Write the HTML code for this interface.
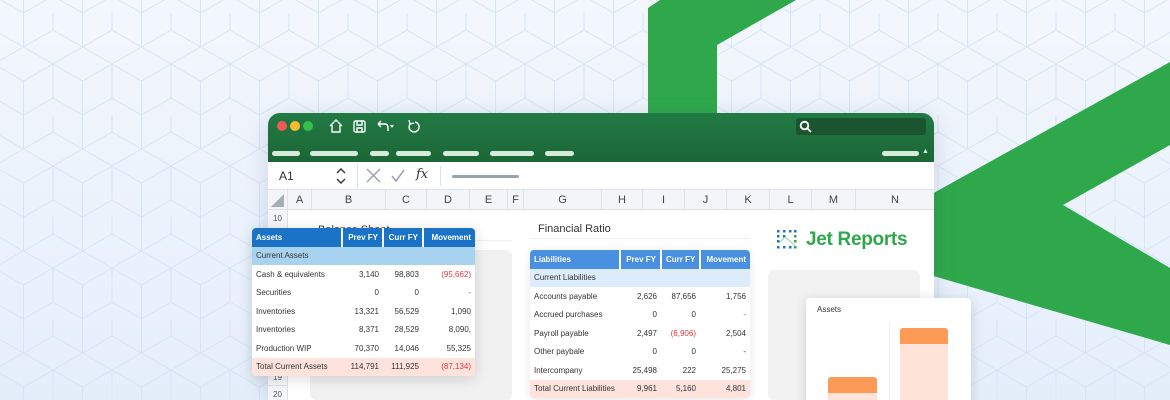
<!DOCTYPE html>
<html><head><meta charset="utf-8"><style>
*{margin:0;padding:0;box-sizing:border-box}
html,body{width:1170px;height:400px;overflow:hidden}
body{position:relative;font-family:"Liberation Sans",sans-serif;background:linear-gradient(180deg,#f3f7fd 0%,#e4eefb 100%)}
.abs{position:absolute}
.t{position:absolute;font-size:8px;color:#333}
table{border-collapse:collapse;font-size:8px;color:#333;table-layout:fixed}
td{padding:0 4px;height:18.5px;white-space:nowrap;overflow:hidden}
.r{text-align:right}
.red{color:#e0393e}
.hd td{color:#fff;font-weight:bold;border-left:2px solid #fff}
.hd td:first-child{border-left:none}
.pill{position:absolute;top:151px;height:5px;border-radius:3px;background:#d5ecdb}
.col{position:absolute;top:190px;height:20px;border-right:1px solid #dde2ea;font-size:11px;color:#444;text-align:center;line-height:20px}
</style></head><body>
<svg class="abs" style="left:0;top:0" width="1170" height="400">
<defs><pattern id="hx" width="59" height="102" patternUnits="userSpaceOnUse" x="-6" y="13">
<g fill="none" stroke="#d6e5f6" stroke-width="1">
<path d="M29.5 0 L29.5 34 L0 51 L0 85 M29.5 34 L59 51 L59 85 M0 85 L29.5 102 M59 85 L29.5 102 M29.5 0 L0 -17 M29.5 0 L59 -17 M0 51 L29.5 68 L59 51 M29.5 68 L29.5 102 M0 -17 L0 17 L29.5 34 M59 -17 L59 17 L29.5 34"/>
</g></pattern></defs>
<rect width="1170" height="400" fill="url(#hx)"/>
<polygon points="648,8 660,0 796,0 717,45 717,120 648,120" fill="#2ea84a"/>
<polygon points="930,195 1170,62 1170,145 1063,205 1170,268 1170,345 930,275" fill="#2ea84a"/>
</svg>
<!-- window -->
<div class="abs" style="left:268px;top:113px;width:666px;height:287px;background:#fff;border-radius:12px 12px 0 0;box-shadow:0 4px 24px rgba(60,80,120,.18);overflow:hidden">
<div class="abs" style="left:0;top:0;width:666px;height:49px;background:linear-gradient(180deg,#217a44,#1c6637)"></div>
</div>
<div class="abs" style="left:277px;top:121px;width:10px;height:10px;border-radius:50%;background:#f05a55"></div>
<div class="abs" style="left:290px;top:121px;width:10px;height:10px;border-radius:50%;background:#f6bb2e"></div>
<div class="abs" style="left:303px;top:121px;width:10px;height:10px;border-radius:50%;background:#35c14a"></div>
<svg class="abs" style="left:325px;top:117px" width="100" height="20" fill="none" stroke="#fff" stroke-width="1.4">
<path d="M5 9 L11 3 L17 9 M7 8 V15 H15 V8"/>
<rect x="29" y="4" width="11" height="11" rx="1.5"/><path d="M32 4 V8 H37 V4 M32 15 V11 H37 V15"/>
<path d="M53 7 H60 Q63 7 63 11 V14 M53 7 L56 4 M53 7 L56 10"/><path d="M65 8 L69 8 L67 11 Z" fill="#fff" stroke="none"/>
<path d="M90 5 A5 5 0 1 1 85 7 M84 3 L85 7 L89 6"/>
</svg>
<div class="abs" style="left:796px;top:118px;width:130px;height:17px;border-radius:3px;background:#1b5530"></div>
<svg class="abs" style="left:799px;top:120px" width="14" height="14" fill="none" stroke="#fff" stroke-width="1.8"><circle cx="5.5" cy="5.5" r="3.8"/><path d="M8.5 8.5 L12 12"/></svg>
<div class="pill" style="left:272px;width:28px"></div>
<div class="pill" style="left:310px;width:48px"></div>
<div class="pill" style="left:370px;width:19px"></div>
<div class="pill" style="left:396px;width:35px"></div>
<div class="pill" style="left:443px;width:36px"></div>
<div class="pill" style="left:490px;width:44px"></div>
<div class="pill" style="left:545px;width:29px"></div>
<div class="pill" style="left:882px;width:37px"></div>
<div class="abs" style="left:922px;top:148px;font-size:7px;color:#d5ecdb">▲</div>
<!-- formula bar -->
<div class="abs" style="left:268px;top:162px;width:666px;height:28px;border-bottom:1px solid #dde2ea"></div>
<div class="t" style="left:279px;top:169px;font-size:12px;color:#333">A1</div>
<svg class="abs" style="left:335px;top:167px" width="12" height="18" fill="none" stroke="#333" stroke-width="1.4"><path d="M2 6 L6 2 L10 6 M2 12 L6 16 L10 12"/></svg>
<div class="abs" style="left:357px;top:162px;width:1px;height:28px;background:#dde2ea"></div>
<svg class="abs" style="left:366px;top:168px" width="70" height="16" fill="none" stroke="#9aa3ad" stroke-width="1.5"><path d="M1 1 L14 14 M14 1 L1 14 M26 8 L30 13 L38 2"/></svg>
<div class="t" style="left:416px;top:167px;font-size:13px;color:#333;font-style:italic;font-family:'DejaVu Serif',serif">fx</div>
<div class="abs" style="left:440px;top:166px;width:1px;height:20px;background:#dde2ea"></div>
<div class="abs" style="left:452px;top:175px;width:67px;height:3px;border-radius:2px;background:#9aa3ad"></div>
<!-- col headers -->
<div class="abs" style="left:268px;top:190px;width:666px;height:20px;background:#f3f5f8;border-bottom:1px solid #dde2ea"></div>
<svg class="abs" style="left:270px;top:193px" width="16" height="15"><path d="M14 1 V14 H1 Z" fill="#a5adb6"/></svg>
<div class="col" style="left:268px;width:20px"></div>
<div class="col" style="left:288px;width:24px">A</div>
<div class="col" style="left:312px;width:74px">B</div>
<div class="col" style="left:386px;width:41px">C</div>
<div class="col" style="left:427px;width:43px">D</div>
<div class="col" style="left:470px;width:38px">E</div>
<div class="col" style="left:508px;width:16px">F</div>
<div class="col" style="left:524px;width:78px">G</div>
<div class="col" style="left:602px;width:41px">H</div>
<div class="col" style="left:643px;width:42px">I</div>
<div class="col" style="left:685px;width:42px">J</div>
<div class="col" style="left:727px;width:43px">K</div>
<div class="col" style="left:770px;width:42px">L</div>
<div class="col" style="left:812px;width:44px">M</div>
<div class="col" style="left:856px;width:78px;border-right:none">N</div>
<div class="abs" style="left:268px;top:210px;width:20px;height:190px;background:#f3f5f8;border-right:1px solid #dde2ea"></div>
<div class="t" style="left:273px;top:214px;color:#555">10</div>
<div class="t" style="left:273px;top:373px;color:#555">19</div>
<div class="abs" style="left:268px;top:385px;width:20px;height:1px;background:#dde2ea"></div>
<div class="t" style="left:273px;top:390px;color:#555">20</div>
<div class="t" style="left:318px;top:224px;font-size:11px;color:#444">Balance Sheet</div>
<div class="abs" style="left:310px;top:240px;width:202px;height:1px;background:#eee"></div>
<div class="abs" style="left:310px;top:250px;width:202px;height:150px;background:#f1f1f1;border-radius:6px"></div>
<div class="t" style="left:538px;top:223px;font-size:11px;color:#333">Financial Ratio</div>
<div class="abs" style="left:530px;top:238px;width:220px;height:1px;background:#eee"></div>
<!-- jet reports -->
<svg class="abs" style="left:777px;top:230px" width="20" height="19">
<g fill="#1e6fd6"><rect x="0" y="0" width="2.5" height="2.5"/><rect x="6" y="0" width="2.5" height="2.5"/><rect x="12" y="0" width="2.5" height="2.5"/><rect x="17" y="0" width="2.5" height="2.5"/>
<rect x="0" y="5" width="2.5" height="2.5"/><rect x="6" y="5" width="2.5" height="2.5"/><rect x="0" y="10" width="2.5" height="2.5"/><rect x="0" y="16" width="2.5" height="2.5"/><rect x="6" y="16" width="2.5" height="2.5"/><rect x="12" y="16" width="2.5" height="2.5"/></g>
<g fill="#2ea84a"><rect x="17" y="5" width="2.5" height="2.5"/><rect x="17" y="10" width="2.5" height="2.5"/><rect x="17" y="16" width="2.5" height="2.5"/></g>
<path d="M2 13 L8 7 L14 12 L18 16" stroke="#8fd39f" fill="none" stroke-width="1"/></svg>
<div class="t" style="left:806px;top:229px;font-size:19px;font-weight:bold;color:#2ea84a;letter-spacing:-.3px">Jet Reports</div>
<div class="abs" style="left:768px;top:270px;width:152px;height:130px;background:#f2f2f2;border-radius:6px"></div>
<div class="abs" style="left:806px;top:298px;width:165px;height:110px;background:#fff;border-radius:4px;box-shadow:0 2px 12px rgba(0,0,0,.15)"></div>
<div class="t" style="left:817px;top:305px;font-size:8px">Assets</div>
<div class="abs" style="left:889px;top:322px;width:1px;height:80px;background:#eee"></div>
<div class="abs" style="left:828px;top:377px;width:49px;height:30px;background:#fde3d8;border-top:16px solid #fd9a55;border-radius:3px 3px 0 0"></div>
<div class="abs" style="left:900px;top:328px;width:48px;height:80px;background:#fde3d8;border-top:16px solid #fd9a55;border-radius:3px 3px 0 0"></div>
<!-- left table -->
<div class="abs" style="left:252px;top:228px;width:223px;background:#fff;border-radius:4px;box-shadow:0 3px 14px rgba(0,0,0,.15);overflow:hidden">
<table style="width:223px">
<colgroup><col style="width:90px"><col style="width:41px"><col style="width:40px"><col style="width:52px"></colgroup>
<tr class="hd" style="background:#1a73c6"><td style="height:17px">Assets</td><td class="r">Prev FY</td><td class="r">Curr FY</td><td class="r">Movement</td></tr>
<tr style="background:#a7d3f0"><td colspan="4">Current Assets</td></tr>
<tr><td>Cash &amp; equivalents</td><td class="r">3,140</td><td class="r">98,803</td><td class="r red">(95,662)</td></tr>
<tr><td>Securities</td><td class="r">0</td><td class="r">0</td><td class="r red">-</td></tr>
<tr><td>Inventories</td><td class="r">13,321</td><td class="r">56,529</td><td class="r">1,090</td></tr>
<tr><td>Inventories</td><td class="r">8,371</td><td class="r">28,529</td><td class="r">8,090,</td></tr>
<tr><td>Production WIP</td><td class="r">70,370</td><td class="r">14,046</td><td class="r">55,325</td></tr>
<tr style="background:#fde3dc"><td>Total Current Assets</td><td class="r">114,791</td><td class="r">111,925</td><td class="r red">(87,134)</td></tr>
</table></div>
<!-- right table -->
<div class="abs" style="left:530px;top:250px;width:220px;background:#fff;border-radius:4px;box-shadow:0 2px 10px rgba(0,0,0,.1);overflow:hidden">
<table style="width:220px">
<colgroup><col style="width:90px"><col style="width:41px"><col style="width:39px"><col style="width:50px"></colgroup>
<tr class="hd" style="background:#4a90e0"><td style="height:18px">Liabilities</td><td class="r">Prev FY</td><td class="r">Curr FY</td><td class="r">Movement</td></tr>
<tr style="background:#dcecfb"><td colspan="4">Current Liabilities</td></tr>
<tr><td>Accounts payable</td><td class="r">2,626</td><td class="r">87,656</td><td class="r">1,756</td></tr>
<tr><td>Accrued purchases</td><td class="r">0</td><td class="r">0</td><td class="r red">-</td></tr>
<tr><td>Payroll payable</td><td class="r">2,497</td><td class="r red">(6,906)</td><td class="r">2,504</td></tr>
<tr><td>Other paybale</td><td class="r">0</td><td class="r">0</td><td class="r">-</td></tr>
<tr><td>Intercompany</td><td class="r">25,498</td><td class="r">222</td><td class="r">25,275</td></tr>
<tr style="background:#fde3dc"><td>Total Current Liabilities</td><td class="r">9,961</td><td class="r">5,160</td><td class="r">4,801</td></tr>
</table></div>
</body></html>
